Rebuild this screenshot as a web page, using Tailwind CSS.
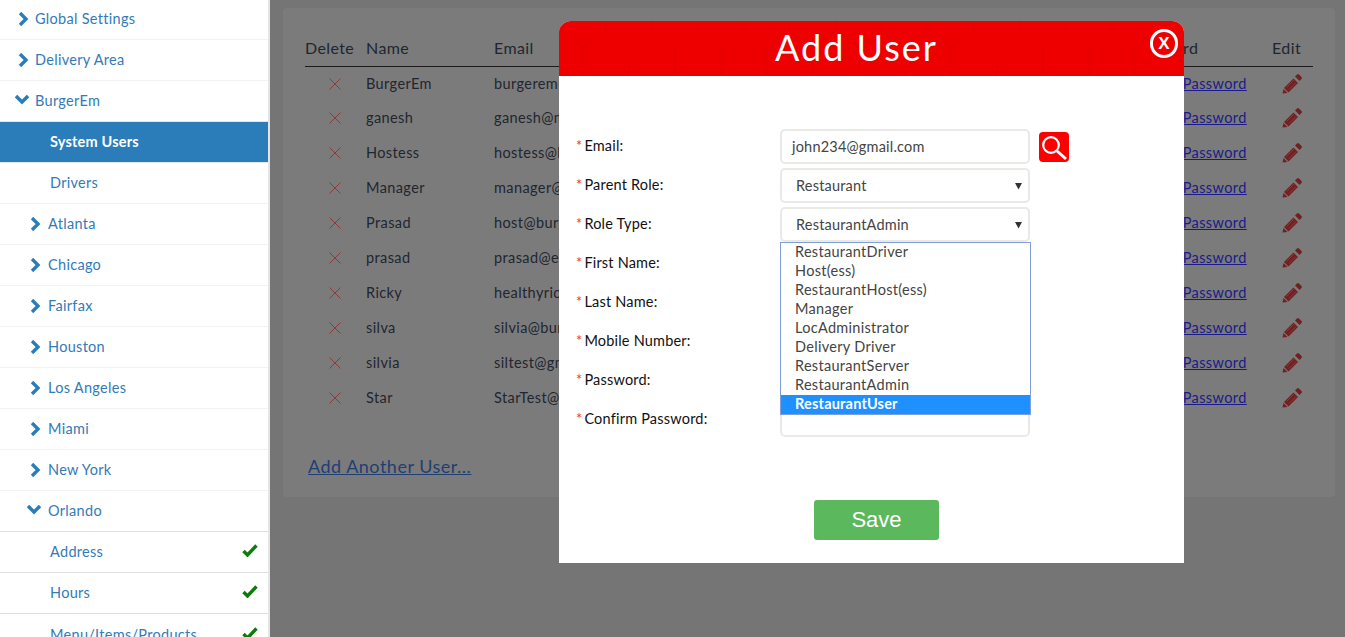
<!DOCTYPE html>
<html lang="en">

<head>
    <meta charset="UTF-8">
    <script src="https://cdn.jsdelivr.net/npm/@tailwindcss/browser@4"></script>
    <title>System Users</title>
</head>

<body class="h-[637px] overflow-hidden bg-[#757575] font-['Lato','Noto_Sans',sans-serif]">
    <div class="relative flex h-[637px] overflow-hidden">
        <!-- sidebar -->
        <div class="w-[270px] h-[637px] shrink-0 overflow-hidden bg-white border-r-2 border-[#e5e5e5] text-[14.5px] text-[#337ab7] tracking-[0.3px]">
            <div class="h-[40px] flex items-center pl-[18px] pb-[2px] border-b border-[#f2f2f2]"><svg class="w-[11px] h-[14px] mr-[6px]" viewBox="0 0 11 14"><path d="M2 1l6 6-6 6" fill="none" stroke="#2a7db8" stroke-width="3.4"/></svg>Global Settings</div>
            <div class="h-[41px] flex items-center pl-[18px] border-b border-[#f2f2f2]"><svg class="w-[11px] h-[14px] mr-[6px]" viewBox="0 0 11 14"><path d="M2 1l6 6-6 6" fill="none" stroke="#2a7db8" stroke-width="3.4"/></svg>Delivery Area</div>
            <div class="h-[41px] flex items-center pl-[15px] border-b border-[#e6e6e6]"><svg class="w-[14px] h-[11px] mr-[6px] mb-[3px]" viewBox="0 0 14 11"><path d="M1 2l6 6 6-6" fill="none" stroke="#2a7db8" stroke-width="3.4"/></svg>BurgerEm</div>
            <div class="h-[41px] flex items-center pl-[50px] bg-[#2a7db8] border-b border-[#e6e6e6] text-white font-bold tracking-[0.2px]">System Users</div>
            <div class="h-[41px] flex items-center pl-[50px] border-b border-[#f2f2f2]">Drivers</div>
            <div class="h-[41px] flex items-center pl-[30px] border-b border-[#f2f2f2]"><svg class="w-[11px] h-[14px] mr-[7px]" viewBox="0 0 11 14"><path d="M2 1l6 6-6 6" fill="none" stroke="#2a7db8" stroke-width="3.4"/></svg>Atlanta</div>
            <div class="h-[41px] flex items-center pl-[30px] border-b border-[#f2f2f2]"><svg class="w-[11px] h-[14px] mr-[7px]" viewBox="0 0 11 14"><path d="M2 1l6 6-6 6" fill="none" stroke="#2a7db8" stroke-width="3.4"/></svg>Chicago</div>
            <div class="h-[41px] flex items-center pl-[30px] border-b border-[#f2f2f2]"><svg class="w-[11px] h-[14px] mr-[7px]" viewBox="0 0 11 14"><path d="M2 1l6 6-6 6" fill="none" stroke="#2a7db8" stroke-width="3.4"/></svg>Fairfax</div>
            <div class="h-[41px] flex items-center pl-[30px] border-b border-[#f2f2f2]"><svg class="w-[11px] h-[14px] mr-[7px]" viewBox="0 0 11 14"><path d="M2 1l6 6-6 6" fill="none" stroke="#2a7db8" stroke-width="3.4"/></svg>Houston</div>
            <div class="h-[41px] flex items-center pl-[30px] border-b border-[#f2f2f2]"><svg class="w-[11px] h-[14px] mr-[7px]" viewBox="0 0 11 14"><path d="M2 1l6 6-6 6" fill="none" stroke="#2a7db8" stroke-width="3.4"/></svg>Los Angeles</div>
            <div class="h-[41px] flex items-center pl-[30px] border-b border-[#f2f2f2]"><svg class="w-[11px] h-[14px] mr-[7px]" viewBox="0 0 11 14"><path d="M2 1l6 6-6 6" fill="none" stroke="#2a7db8" stroke-width="3.4"/></svg>Miami</div>
            <div class="h-[41px] flex items-center pl-[30px] border-b border-[#f2f2f2]"><svg class="w-[11px] h-[14px] mr-[7px]" viewBox="0 0 11 14"><path d="M2 1l6 6-6 6" fill="none" stroke="#2a7db8" stroke-width="3.4"/></svg>New York</div>
            <div class="h-[41px] flex items-center pl-[27px] border-b border-[#e0e0e0]"><svg class="w-[14px] h-[11px] mr-[7px] mb-[3px]" viewBox="0 0 14 11"><path d="M1 2l6 6 6-6" fill="none" stroke="#2a7db8" stroke-width="3.4"/></svg>Orlando</div>
            <div class="h-[41px] flex items-center justify-between pl-[50px] pr-[10px] border-b border-[#e0e0e0]">Address<svg class="w-[16px] h-[13px] mb-[3px]" viewBox="0 0 16 13"><path d="M1.5 7l4 4 9-9.5" fill="none" stroke="#0a7d0a" stroke-width="3.4"/></svg></div>
            <div class="h-[41px] flex items-center justify-between pl-[50px] pr-[10px] border-b border-[#e0e0e0]">Hours<svg class="w-[16px] h-[13px] mb-[3px]" viewBox="0 0 16 13"><path d="M1.5 7l4 4 9-9.5" fill="none" stroke="#0a7d0a" stroke-width="3.4"/></svg></div>
            <div class="h-[41px] flex items-center justify-between pl-[50px] pr-[10px]">Menu/Items/Products<svg class="w-[16px] h-[13px] mb-[3px]" viewBox="0 0 16 13"><path d="M1.5 7l4 4 9-9.5" fill="none" stroke="#0a7d0a" stroke-width="3.4"/></svg></div>
        </div>

        <!-- main content, dimmed by the modal backdrop -->
        <div class="flex-1 pt-[8px] pl-[13px] pr-[10px]">
            <div class="h-[489px] bg-[#7b7b7b] rounded-[4px] pt-[27px] px-[22px] text-[14.5px] text-[#1f2630] tracking-[0.4px]">
                <div class="grid grid-cols-[61px_128px_634px_144px_41px] h-[32px] border-b border-[#1a1a1a] text-[16px] items-start pt-[1px]">
                    <span>Delete</span><span>Name</span><span>Email</span><span>Password</span><span>Edit</span>
                </div>
                <div id="rows"></div>
                <div class="mt-[38px] pl-[3px] text-[18px] text-[#1f3f73] underline tracking-[0.5px]">Add Another User...</div>
            </div>
        </div>

        <!-- modal -->
        <div class="absolute left-[559px] top-[21px] w-[625px] h-[542px] bg-white rounded-t-[12px] overflow-hidden">
            <div class="relative h-[55px] bg-[#ee0000] flex items-center justify-center pr-[30px] pb-[4px] text-white text-[36px] tracking-[2px]">
                <svg class="absolute inset-0 w-[625px] h-[55px]" viewBox="0 0 625 55"><defs><pattern id="hex" width="46" height="80" patternUnits="userSpaceOnUse" x="1"><path d="M0 0V9L23 26V53L0 70V80M23 26L46 9V0M23 53L46 70V80" fill="none" stroke="#e30000"/></pattern></defs><rect width="625" height="55" fill="url(#hex)"/></svg>
                <span class="relative">Add User</span>
                <div class="absolute right-[6px] top-[8px] w-[28px] h-[29px] border-[3px] border-white rounded-full flex items-center justify-center font-['Liberation_Sans'] text-[17px] font-bold tracking-normal">X</div>
            </div>
            <div class="pt-[53px] pl-[17px] text-[14.5px] text-[#111] tracking-[0.2px]">
                <div class="flex items-start h-[39px]"><label class="w-[204px] pt-[6px]"><span class="text-[#e33]">*</span><span class="ml-[2px]">Email:</span></label><div class="w-[250px] h-[35px] border-2 border-[#e9e9e5] rounded-[5px] pl-[10px] flex items-center text-[#444]">john234@gmail.com</div><div class="ml-[9px] mt-[3px] w-[30px] h-[30px] bg-[#ff0000] rounded-[4px]"><svg class="w-[30px] h-[30px]" viewBox="0 0 30 30"><circle cx="12" cy="13" r="7.8" fill="none" stroke="#fff" stroke-width="2.2"/><path d="M18 19l9 8" stroke="#fff" stroke-width="3"/></svg></div></div>
                <div class="flex items-start h-[39px]"><label class="w-[204px] pt-[6px]"><span class="text-[#e33]">*</span><span class="ml-[2px]">Parent Role:</span></label><div class="w-[250px] h-[35px] border-2 border-[#e9e9e5] rounded-[5px] pl-[14px] pr-[6px] flex items-center justify-between text-[#444]">Restaurant<svg class="w-[7px] h-[8px]" viewBox="0 0 7 8"><path d="M0 1h7L3.500 7.500z" fill="#333"/></svg></div></div>
                <div class="flex items-start h-[39px]"><label class="w-[204px] pt-[6px]"><span class="text-[#e33]">*</span><span class="ml-[2px]">Role Type:</span></label><div class="w-[250px] h-[35px] border-2 border-[#e9e9e5] rounded-[5px] pl-[14px] pr-[6px] flex items-center justify-between text-[#444]">RestaurantAdmin<svg class="w-[7px] h-[8px]" viewBox="0 0 7 8"><path d="M0 1h7L3.500 7.500z" fill="#333"/></svg></div></div>
                <div class="flex items-start h-[39px]"><label class="w-[204px] pt-[6px]"><span class="text-[#e33]">*</span><span class="ml-[2px]">First Name:</span></label><div class="w-[250px] h-[35px] border-2 border-[#e9e9e5] rounded-[5px]"></div></div>
                <div class="flex items-start h-[39px]"><label class="w-[204px] pt-[6px]"><span class="text-[#e33]">*</span><span class="ml-[2px]">Last Name:</span></label><div class="w-[250px] h-[35px] border-2 border-[#e9e9e5] rounded-[5px]"></div></div>
                <div class="flex items-start h-[39px]"><label class="w-[204px] pt-[6px]"><span class="text-[#e33]">*</span><span class="ml-[2px]">Mobile Number:</span></label><div class="w-[250px] h-[35px] border-2 border-[#e9e9e5] rounded-[5px]"></div></div>
                <div class="flex items-start h-[39px]"><label class="w-[204px] pt-[6px]"><span class="text-[#e33]">*</span><span class="ml-[2px]">Password:</span></label><div class="w-[250px] h-[35px] border-2 border-[#e9e9e5] rounded-[5px]"></div></div>
                <div class="flex items-start h-[39px]"><label class="w-[204px] pt-[6px]"><span class="text-[#e33]">*</span><span class="ml-[2px]">Confirm Password:</span></label><div class="w-[250px] h-[35px] border-2 border-[#e9e9e5] rounded-[5px]"></div></div>
            </div>
            <div class="mt-[59px] ml-[255px] w-[125px] h-[40px] pb-[2px] bg-[#5cb85c] rounded-[3px] flex items-center justify-center text-white text-[22px] font-['Liberation_Sans']">Save</div>
            <!-- open select list -->
            <div class="absolute left-[221px] top-[221px] w-[251px] h-[173px] bg-white border border-[#7f9fdb] text-[14.5px] text-[#444] tracking-[0.3px]">
                <div class="pl-[14px] h-[19px] leading-[17px]">RestaurantDriver</div>
                <div class="pl-[14px] h-[19px] leading-[17px]">Host(ess)</div>
                <div class="pl-[14px] h-[19px] leading-[17px]">RestaurantHost(ess)</div>
                <div class="pl-[14px] h-[19px] leading-[17px]">Manager</div>
                <div class="pl-[14px] h-[19px] leading-[17px]">LocAdministrator</div>
                <div class="pl-[14px] h-[19px] leading-[17px]">Delivery Driver</div>
                <div class="pl-[14px] h-[19px] leading-[17px]">RestaurantServer</div>
                <div class="pl-[14px] h-[19px] leading-[17px]">RestaurantAdmin</div>
                <div class="pl-[14px] h-[19px] leading-[17px] bg-[#1e90ff] text-white font-bold tracking-[0.2px]">RestaurantUser</div>
            </div>
        </div>
    </div>

    <script>
        // the email column runs under the modal, only the first 65px ever shows
        const users = [
            ['BurgerEm', 'burgerem@burgerem.com'], ['ganesh', 'ganesh@mail.com'], ['Hostess', 'hostess@burgerem.com'],
            ['Manager', 'manager@burgerem.com'], ['Prasad', 'host@burgerem.com'], ['prasad', 'prasad@email.com'],
            ['Ricky', 'healthyricky@mail.com'], ['silva', 'silvia@burgerem.com'], ['silvia', 'siltest@gmail.com'], ['Star', 'StarTest@mail.com']
        ];
        document.getElementById('rows').innerHTML = users.map((u, i) => `
            <div class="grid grid-cols-[61px_128px_634px_144px_41px] ${i === 0 ? 'h-[33px]' : 'h-[35px]'} items-center">
                <svg class="w-[14px] h-[14px] ml-[23px]" viewBox="0 0 14 14"><path d="M1.500 1.500l11 11M12.500 1.500l-11 11" stroke="#8f3a3a"/></svg>
                <span>${u[0]}</span><span class="w-[65px] whitespace-nowrap overflow-hidden">${u[1]}</span>
                <span class="text-[#1a1a8c] underline whitespace-nowrap">Change Password</span>
                <svg class="w-[21px] h-[21px] ml-[10px]" viewBox="0 0 21 21"><path d="M2 15L11.500 5.500L16 10L6.500 19.500z" fill="#702020"/><path d="M4.500 14.500L12 7M7 16.500L14 9.500" stroke="#8a3a3a" fill="none"/><path d="M1.500 16L5.500 20L0.500 20.500z" fill="#702020"/><path d="M13 3.500L15 1.500Q16 .5 17 1.500L19.500 4Q20.500 5 19.500 6L17.500 8z" fill="#702020"/></svg>
            </div>`).join('');
    </script>
</body>

</html>
